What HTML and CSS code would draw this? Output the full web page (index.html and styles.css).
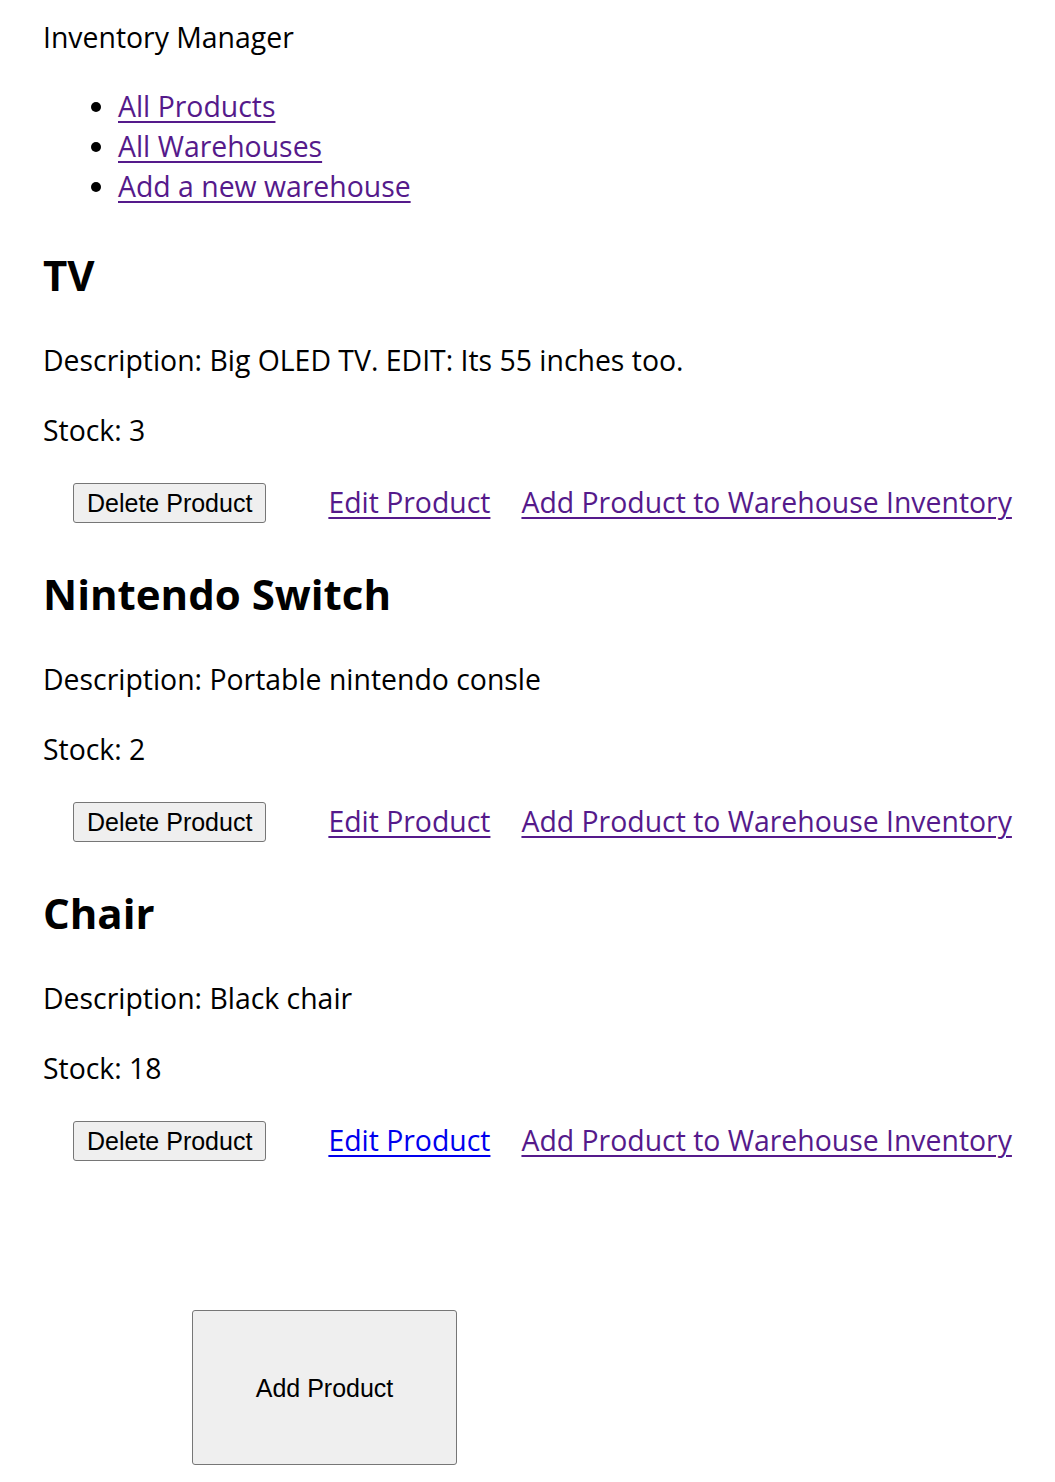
FILE: index.html
```html
<!DOCTYPE html>
<html lang="en">
<head>
<meta charset="utf-8">
<title>Inventory Manager</title>
<link rel="stylesheet" href="styles.css">
</head>
<body>
<div class="page">
  <div class="title">Inventory Manager</div>
  <ul class="nav">
    <li><a class="visited" href="#">All Products</a></li>
    <li><a class="visited" href="#">All Warehouses</a></li>
    <li><a class="visited" href="#">Add a new warehouse</a></li>
  </ul>
  <div class="products">
    <section class="product">
      <h2>TV</h2>
      <p class="desc">Description: Big OLED TV. EDIT: Its 55 inches too.</p>
      <p class="stock">Stock: 3</p>
      <div class="actions">
        <button class="btn" type="button">Delete Product</button>
        <a class="visited edit" href="#">Edit Product</a>
        <a class="visited" href="#">Add Product to Warehouse Inventory</a>
      </div>
    </section>
    <section class="product">
      <h2>Nintendo Switch</h2>
      <p class="desc">Description: Portable nintendo consle</p>
      <p class="stock">Stock: 2</p>
      <div class="actions">
        <button class="btn" type="button">Delete Product</button>
        <a class="visited edit" href="#">Edit Product</a>
        <a class="visited" href="#">Add Product to Warehouse Inventory</a>
      </div>
    </section>
    <section class="product">
      <h2>Chair</h2>
      <p class="desc">Description: Black chair</p>
      <p class="stock">Stock: 18</p>
      <div class="actions">
        <button class="btn" type="button">Delete Product</button>
        <a class="link edit" href="#">Edit Product</a>
        <a class="visited" href="#">Add Product to Warehouse Inventory</a>
      </div>
    </section>
  </div>
  <button class="btn add" type="button">Add Product</button>
</div>
</body>
</html>
```

FILE: styles.css
```css
html, body {
  margin: 0;
  padding: 0;
  background: #ffffff;
}

.page {
  padding: 17px 0 0 43px;
  font-family: "Open Sans", "Noto Sans", sans-serif;
  font-size: 28.4px;
  line-height: 40px;
  color: #000000;
}

.title {
  margin: 0;
}

.nav {
  margin: 29px 0 0;
  padding-left: 75px;
  list-style: disc;
}

.nav li {
  line-height: 40px;
}

a {
  text-decoration: underline;
  text-decoration-thickness: 2px;
  text-underline-offset: 4px;
}

a.visited {
  color: #551a8b;
}

a.link {
  color: #0000ee;
}

.products {
  display: flex;
  flex-direction: column;
  gap: 41px;
  margin-top: 39px;
}

.product h2 {
  margin: 0;
  font-size: 42px;
  line-height: 60px;
  font-weight: 700;
}

.desc {
  margin: 35px 0 0;
}

.stock {
  margin: 30px 0 0;
}

.actions {
  display: flex;
  align-items: center;
  margin-top: 33px;
  padding-left: 30px;
  height: 40px;
}

.actions a {
  margin-bottom: 3px;
}

.btn {
  font-family: "Liberation Sans", Arial, sans-serif;
  font-size: 25px;
  color: #000000;
  background: #efefef;
  border: 1px solid #767676;
  border-radius: 3px;
  padding: 0 13px;
  height: 40px;
  line-height: 38px;
}

.actions .edit {
  margin-left: 62px;
  margin-right: 31px;
}

.add {
  display: block;
  margin: 149px 0 0 149px;
  width: 265px;
  height: 155px;
}
```
